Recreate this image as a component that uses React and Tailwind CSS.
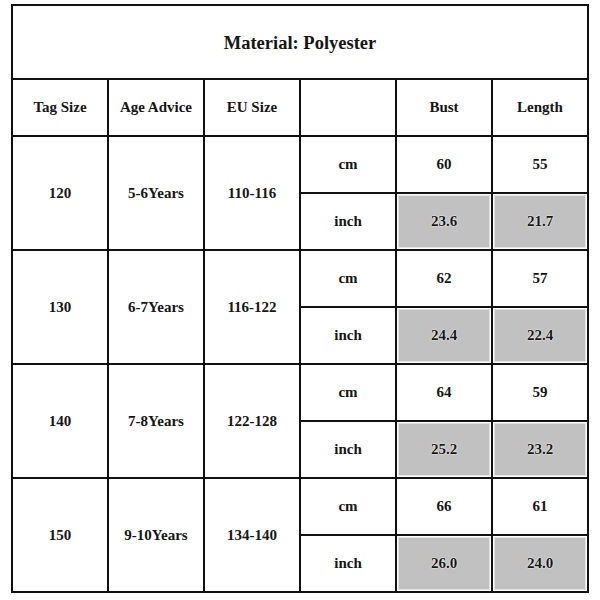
const rows = [
  { tag: "120", age: "5-6Years", eu: "110-116", cm: ["60", "55"], inch: ["23.6", "21.7"] },
  { tag: "130", age: "6-7Years", eu: "116-122", cm: ["62", "57"], inch: ["24.4", "22.4"] },
  { tag: "140", age: "7-8Years", eu: "122-128", cm: ["64", "59"], inch: ["25.2", "23.2"] },
  { tag: "150", age: "9-10Years", eu: "134-140", cm: ["66", "61"], inch: ["26.0", "24.0"] },
];

const Cell = ({ children, className = "" }) => (
  <div className={`bg-white flex items-center justify-center ${className}`}>{children}</div>
);

const GrayCell = ({ children }) => (
  <div className="bg-white p-[1px] flex">
    <div className="flex-1 flex items-center justify-center border border-[#e2e2e2] bg-[#c1c1c1] [text-shadow:0_0_2px_#fff,0_0_1px_#fff]">
      {children}
    </div>
  </div>
);

export default function App() {
  return (
    <div className="w-[600px] h-[600px] bg-white pl-[11px] pt-[4px] font-['Liberation_Serif','Times_New_Roman',serif]">
      <div className="inline-grid grid-cols-[repeat(6,94px)] grid-rows-[72px_repeat(9,55px)] gap-[2px] p-[2px] bg-[#111] text-[15px] font-bold text-[#151515]">
        <Cell className="col-span-6 text-[18.5px] pt-[4px]">Material: Polyester</Cell>
        <Cell>Tag Size</Cell>
        <Cell>Age Advice</Cell>
        <Cell>EU Size</Cell>
        <Cell />
        <Cell>Bust</Cell>
        <Cell>Length</Cell>
        {rows.map((r) => (
          <div key={r.tag} className="contents">
            <Cell className="row-span-2">{r.tag}</Cell>
            <Cell className="row-span-2">{r.age}</Cell>
            <Cell className="row-span-2">{r.eu}</Cell>
            <Cell>cm</Cell>
            <Cell>{r.cm[0]}</Cell>
            <Cell>{r.cm[1]}</Cell>
            <Cell>inch</Cell>
            <GrayCell>{r.inch[0]}</GrayCell>
            <GrayCell>{r.inch[1]}</GrayCell>
          </div>
        ))}
      </div>
    </div>
  );
}
